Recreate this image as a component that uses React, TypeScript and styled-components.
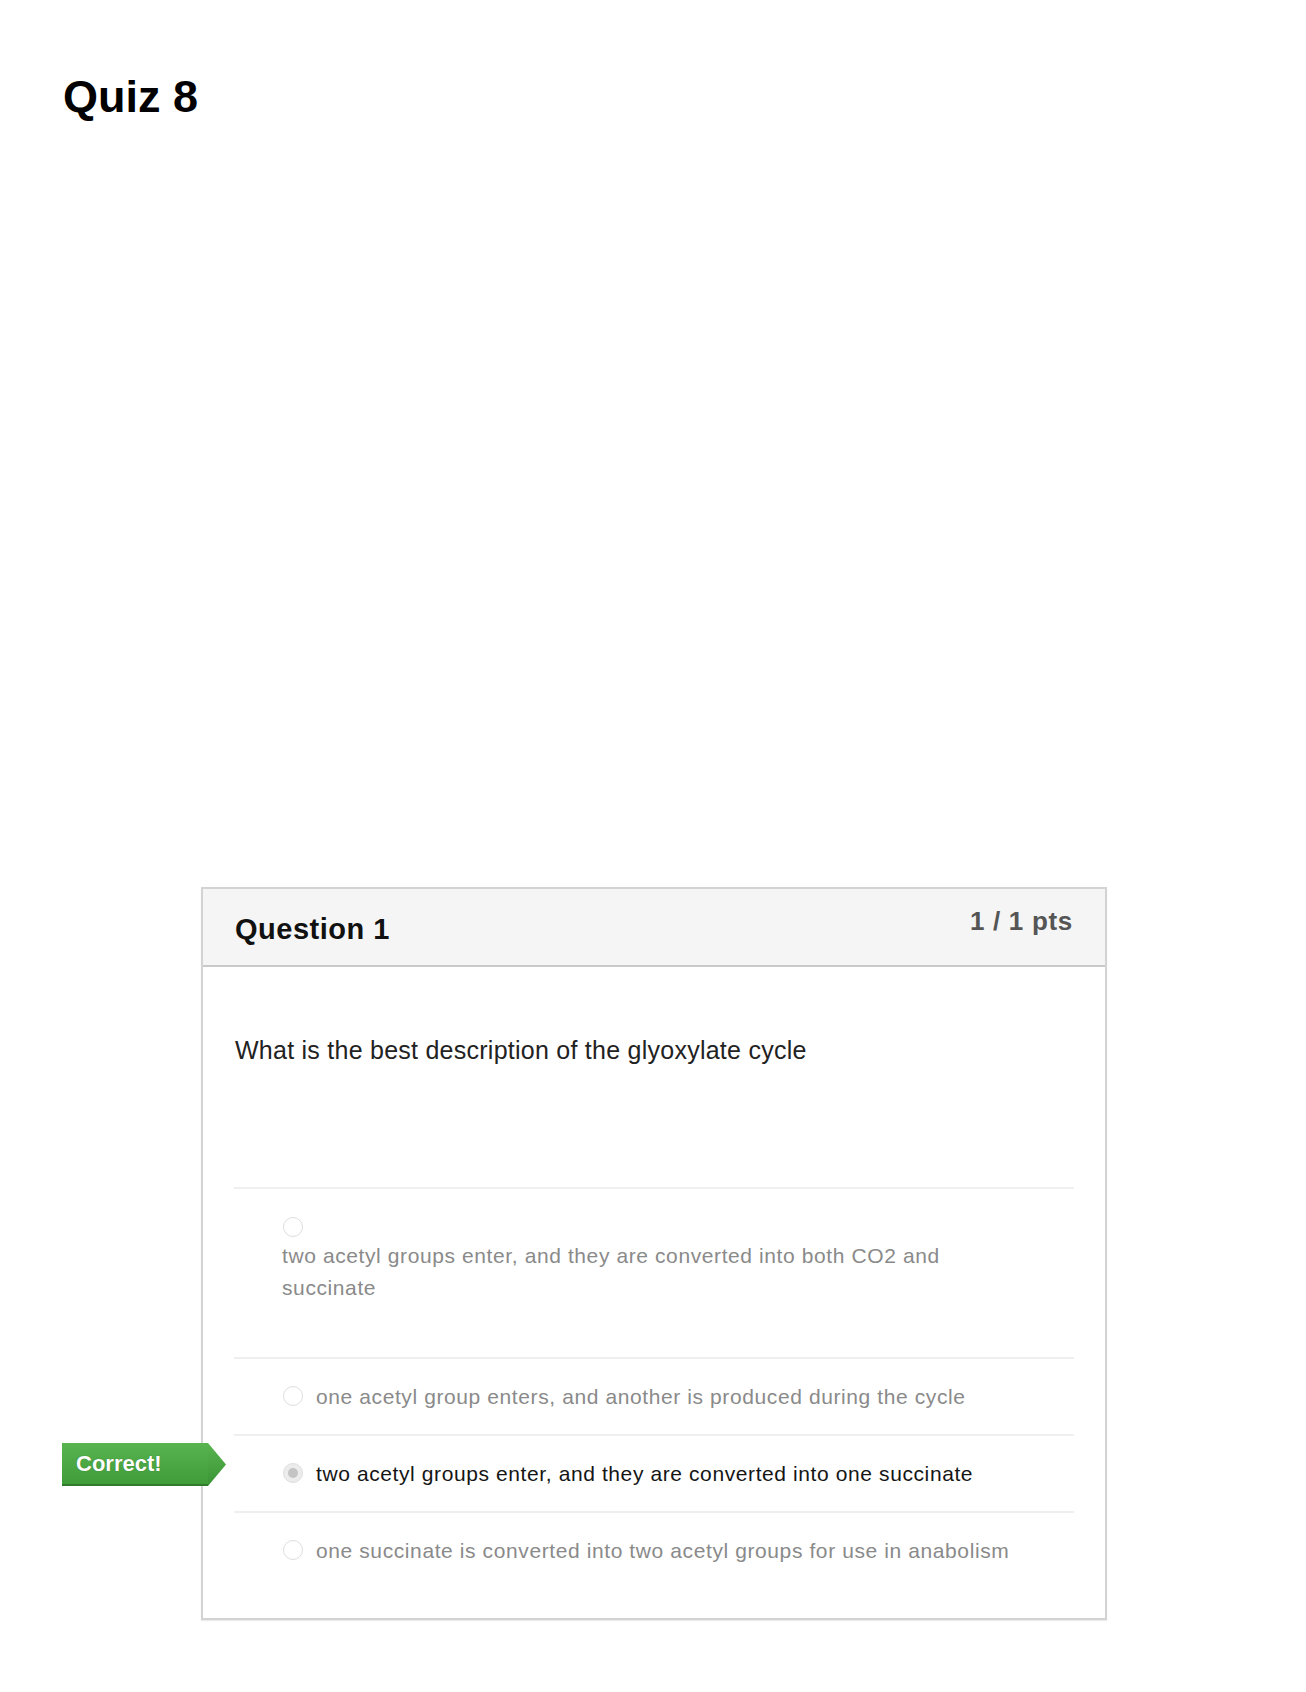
import React, { FC } from 'react'
import styled, { createGlobalStyle } from 'styled-components'

type Answer = {
  text: string
  selected?: boolean
  correct?: boolean
  stacked?: boolean
}

const answers: Answer[] = [
  {
    text: 'two acetyl groups enter, and they are converted into both CO2 and succinate',
    stacked: true,
  },
  { text: 'one acetyl group enters, and another is produced during the cycle' },
  {
    text: 'two acetyl groups enter, and they are converted into one succinate',
    selected: true,
    correct: true,
  },
  { text: 'one succinate is converted into two acetyl groups for use in anabolism' },
]

const App: FC = () => {
  return (
    <Page>
      <GlobalStyles />
      <PageTitle>Quiz 8</PageTitle>
      <QuestionCard>
        <CardHeader>
          <QuestionName>Question 1</QuestionName>
          <Points>1 / 1 pts</Points>
        </CardHeader>
        <CardBody>
          <QuestionText>What is the best description of the glyoxylate cycle</QuestionText>
          <AnswerList>
            {answers.map((a) => (
              <AnswerRow key={a.text} $stacked={a.stacked}>
                {a.correct && <CorrectFlag>Correct!</CorrectFlag>}
                <Radio $checked={a.selected} />
                <AnswerText $selected={a.selected} $stacked={a.stacked}>
                  {a.text}
                </AnswerText>
              </AnswerRow>
            ))}
          </AnswerList>
        </CardBody>
      </QuestionCard>
    </Page>
  )
}

export default App

const GlobalStyles = createGlobalStyle`
  body {
    margin: 0;
    background: #ffffff;
    font-family: 'Liberation Sans', Arial, sans-serif;
  }
`

const Page = styled.div`
  padding: 74px 0 72px 63px;
`

const PageTitle = styled.h1`
  margin: 0;
  font-size: 45px;
  line-height: 45px;
  font-weight: 700;
  color: #000;
`

const QuestionCard = styled.div`
  margin: 768px 0 0 138px;
  width: 902px;
  border: 2px solid #d3d3d3;
  box-shadow: 0 1px 1px rgba(0, 0, 0, 0.08);
  background: #fff;
`

const CardHeader = styled.div`
  display: flex;
  justify-content: space-between;
  align-items: flex-start;
  height: 57px;
  padding: 19px 32px 0 32px;
  background: #f5f5f5;
  border-bottom: 2px solid #c9c9c9;
`

const QuestionName = styled.h2`
  margin: 7px 0 0 0;
  font-size: 29px;
  line-height: 29px;
  letter-spacing: 0.5px;
  font-weight: 700;
  color: #111;
`

const Points = styled.div`
  font-size: 26px;
  line-height: 26px;
  letter-spacing: 0.7px;
  font-weight: 700;
  color: #555;
`

const CardBody = styled.div`
  padding: 67px 31px 30px 31px;
`

const QuestionText = styled.p`
  margin: 0 0 120.5px 1px;
  font-size: 25px;
  line-height: 32.5px;
  letter-spacing: 0.25px;
  color: #222;
`

const AnswerList = styled.div`
  display: flex;
  flex-direction: column;
`

const AnswerRow = styled.label<{ $stacked?: boolean }>`
  position: relative;
  display: flex;
  flex-direction: ${(p) => (p.$stacked ? 'column' : 'row')};
  align-items: ${(p) => (p.$stacked ? 'flex-start' : 'center')};
  gap: ${(p) => (p.$stacked ? '1px' : '13px')};
  padding: ${(p) => (p.$stacked ? '28px 60px 53px 49px' : '21.5px 60px 21.5px 49px')};
  border-top: 2px solid #efefef;
`

const Radio = styled.span<{ $checked?: boolean }>`
  position: relative;
  flex: none;
  width: 18px;
  height: 18px;
  margin-bottom: 2px;
  border-radius: 50%;
  border: 1px solid #dedede;
  background: ${(p) => (p.$checked ? '#ececec' : '#fff')};

  &::after {
    content: '';
    display: ${(p) => (p.$checked ? 'block' : 'none')};
    position: absolute;
    top: 4px;
    left: 4px;
    width: 10px;
    height: 10px;
    border-radius: 50%;
    background: #c4c4c4;
  }
`

const AnswerText = styled.div<{ $selected?: boolean; $stacked?: boolean }>`
  margin-left: ${(p) => (p.$stacked ? '-1px' : '0')};
  font-size: 21px;
  line-height: 32px;
  letter-spacing: 0.6px;
  color: ${(p) => (p.$selected ? '#151515' : '#8a8a8a')};
`

const CorrectFlag = styled.span`
  position: absolute;
  left: -172px;
  top: 7px;
  box-sizing: border-box;
  width: 146px;
  height: 43px;
  padding-left: 14px;
  font-size: 22px;
  line-height: 41px;
  font-weight: 700;
  color: #fff;
  text-shadow: 0 0 1px rgba(0, 0, 0, 0.35);
  background: linear-gradient(to bottom, #58b44f, #3f9c39);
  border-bottom: 2px solid #2f7a2b;

  &::after {
    content: '';
    position: absolute;
    top: 0;
    right: -18px;
    width: 18px;
    height: 43px;
    background: linear-gradient(to bottom, #58b44f, #3a9434);
    clip-path: polygon(0 0, 100% 50%, 0 100%);
  }
`
